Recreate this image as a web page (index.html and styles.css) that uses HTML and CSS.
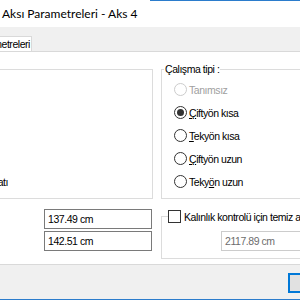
FILE: index.html
```html
<!DOCTYPE html>
<html lang="tr">
<head>
    <meta charset="UTF-8">
    <title>Aksı Parametreleri - Aks 4</title>
    <link rel="stylesheet" href="styles.css">
</head>
<body>
    <div class="window">
        <div class="titlebar">
            <span class="title">Aksı Parametreleri - Aks 4</span>
        </div>

        <div class="tabstrip">
            <div class="tab"><span>Parametreleri</span></div>
        </div>

        <div class="page">
            <div class="top-row">
                <div class="group left-group">
                    <div class="clip"><span>Donatı</span></div>
                </div>

                <div class="group work-group">
                    <div class="group-title">Çalışma tipi :</div>
                    <div class="radios">
                        <div class="radio disabled"><span class="dot"></span><span>Tanımsız</span></div>
                        <div class="radio checked"><span class="dot"></span><span><u>Ç</u>iftyön kısa</span></div>
                        <div class="radio"><span class="dot"></span><span><u>T</u>ekyön kısa</span></div>
                        <div class="radio"><span class="dot"></span><span><u>Ç</u>iftyön uzun</span></div>
                        <div class="radio"><span class="dot"></span><span>Teky<u>ö</u>n uzun</span></div>
                    </div>
                </div>
            </div>

            <div class="bottom-row">
                <div class="fields">
                    <div class="field">137.49 cm</div>
                    <div class="field">142.51 cm</div>
                </div>

                <div class="group check-group">
                    <div class="check-title"><span class="box"></span><span>Kalınlık kontrolü için temiz acıklık</span></div>
                    <div class="field disabled">2117.89 cm</div>
                </div>
            </div>
        </div>

        <div class="buttons">
            <div class="btn">Tamam</div>
        </div>
    </div>
</body>
</html>
```

FILE: styles.css
```css
* {
    box-sizing: border-box;
}

body {
    margin: 0;
    width: 300px;
    height: 300px;
    overflow: hidden;
    font-family: "Liberation Sans", Arial, sans-serif;
    font-size: 10.5px;
    letter-spacing: -0.45px;
    color: #000;
}

.window {
    height: 300px;
    display: flex;
    flex-direction: column;
    background: #f0f0f0;
    border-bottom: 1px solid #2b7ccc;
    overflow: hidden;
}

.titlebar {
    height: 27px;
    flex: none;
    display: flex;
    align-items: center;
    padding-left: 2px;
    background: linear-gradient(#2b7ccc, #2b7ccc) right top / 150px 1px no-repeat, #fff;
}

.title {
    font-family: Lato, "Liberation Sans", sans-serif;
    font-size: 12px;
    letter-spacing: 0;
    white-space: nowrap;
}

.tabstrip {
    height: 24px;
    flex: none;
    display: flex;
    align-items: flex-end;
}

.tab {
    width: 32px;
    height: 15px;
    padding-right: 1px;
    border: 1px solid #d9d9d9;
    border-left: none;
    border-bottom: none;
    background: #fff;
    display: flex;
    justify-content: flex-end;
    overflow: hidden;
    white-space: nowrap;
    line-height: 14px;
}

.page {
    height: 214px;
    flex: none;
    background: #fff;
    border-top: 1px solid #d9d9d9;
    border-bottom: 1px solid #d9d9d9;
}

.group {
    border: 1px solid #dcdcdc;
}

.top-row {
    display: flex;
    gap: 8px;
    height: 130px;
    margin-top: 17px;
}

.left-group {
    width: 153px;
    flex: none;
    border-left: none;
    display: flex;
    flex-direction: column;
    justify-content: flex-end;
    padding-bottom: 9px;
}

.clip {
    width: 8px;
    display: flex;
    justify-content: flex-end;
    overflow: hidden;
    white-space: nowrap;
    line-height: 13px;
}

.work-group {
    flex: 1;
    border-right: none;
    display: flex;
    flex-direction: column;
    align-items: flex-start;
}

.group-title {
    height: 13px;
    line-height: 13px;
    margin: -7px 0 0 2px;
    padding: 0 1px;
    background: #fff;
}

.radios {
    display: flex;
    flex-direction: column;
    margin-top: 2px;
    padding-left: 12px;
}

.radio {
    height: 23px;
    display: flex;
    align-items: center;
    gap: 2px;
    white-space: nowrap;
}

.dot {
    width: 13px;
    height: 13px;
    flex: none;
    border: 1px solid #333;
    border-radius: 50%;
    background: #fff;
    display: flex;
    align-items: center;
    justify-content: center;
}

.radio.checked .dot::after {
    content: "";
    width: 7px;
    height: 7px;
    border-radius: 50%;
    background: #333;
}

.radio.disabled {
    color: #a0a0a0;
}

.radio.disabled .dot {
    border-color: #ccc;
}

.bottom-row {
    display: flex;
    gap: 8px;
    margin-top: 10px;
}

.fields {
    width: 153px;
    flex: none;
    padding-left: 44px;
    display: flex;
    flex-direction: column;
    gap: 2px;
}

.field {
    width: 108px;
    height: 20px;
    padding-left: 3px;
    border: 1px solid #7a7a7a;
    background: #fff;
    line-height: 18px;
    white-space: nowrap;
}

.check-group {
    flex: 1;
    height: 43px;
    margin-top: 7px;
    border-right: none;
    display: flex;
    flex-direction: column;
    align-items: flex-start;
}

.check-title {
    height: 13px;
    margin: -7px 0 0 6px;
    padding-right: 2px;
    display: flex;
    align-items: center;
    gap: 3px;
    background: #fff;
    white-space: nowrap;
}

.box {
    width: 13px;
    height: 13px;
    flex: none;
    border: 1px solid #333;
    background: #fff;
}

.field.disabled {
    width: 120px;
    margin: 8px 0 0 59px;
    border-color: #ccc;
    color: #6d6d6d;
}

.buttons {
    flex: 1;
    padding: 8px 0 0 288px;
}

.btn {
    width: 75px;
    height: 20px;
    border: 2px solid #0078d7;
    background: #e1e1e1;
    text-align: center;
    line-height: 16px;
}
```
